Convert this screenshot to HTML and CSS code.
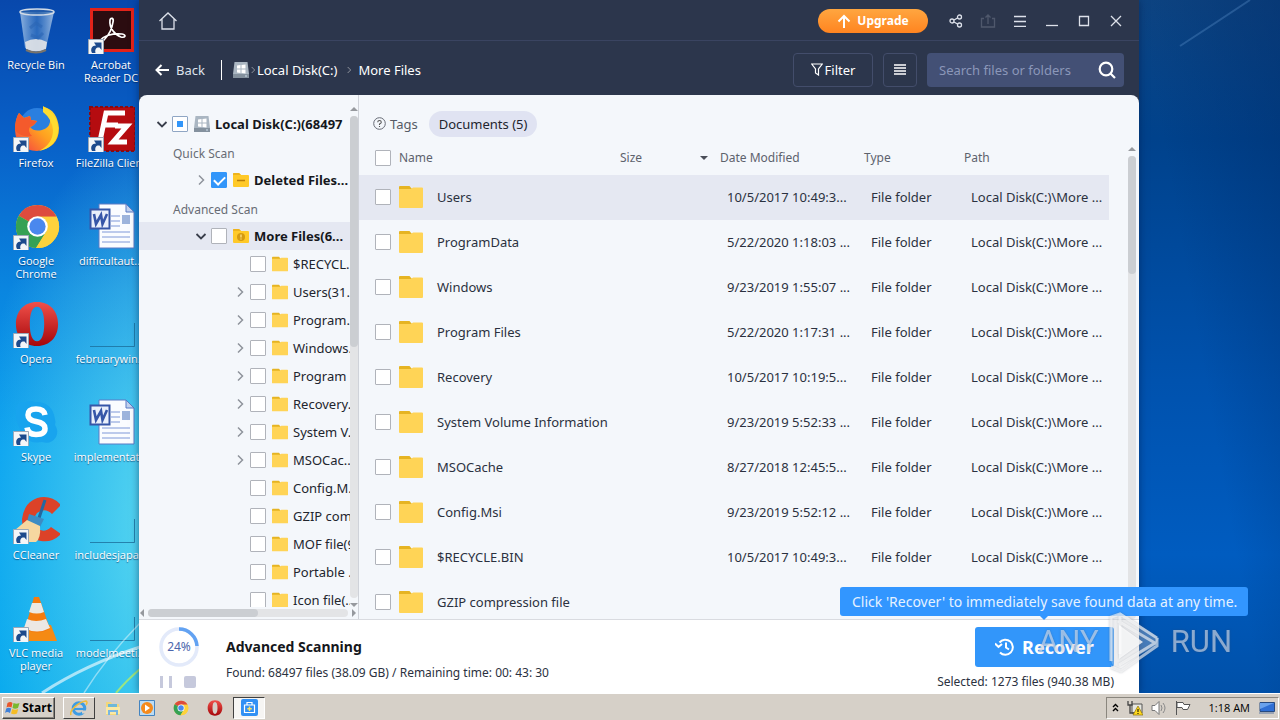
FILE: index.html
```html
<!DOCTYPE html>
<html lang="en">

<head>
    <meta charset="UTF-8">
    <meta name="viewport" content="width=device-width, initial-scale=1.0">
    <title>Data Recovery - More Files</title>
    <link rel="stylesheet" href="styles.css">
</head>

<body>
    <!-- Shared icons -->
    <svg class="sprite" width="0" height="0" aria-hidden="true">
        <symbol id="folder" viewBox="0 0 24 22">
            <path d="M0 1Q0 0 1 0h9.500l2.500 3v5H0z" fill="#e6b422" />
            <path d="M0 3h12l2-1.500h9q1 0 1 1V21q0 1-1 1H1q-1 0-1-1z" fill="#ffd456" />
        </symbol>
        <symbol id="folder-minus" viewBox="0 0 16 16">
            <path d="M0 2q0-1 1-1h5l2 2h7q1 0 1 1v10q0 1-1 1H1q-1 0-1-1z" fill="#ffc928" />
            <path d="M0 2q0-1 1-1h5l2 2H0z" fill="#eeb31c" />
            <path d="M4 8.500h8" stroke="#b97e08" stroke-width="1.500" />
        </symbol>
        <symbol id="folder-info" viewBox="0 0 16 16">
            <path d="M0 2q0-1 1-1h5l2 2h7q1 0 1 1v10q0 1-1 1H1q-1 0-1-1z" fill="#ffc928" />
            <path d="M0 2q0-1 1-1h5l2 2H0z" fill="#eeb31c" />
            <circle cx="8" cy="9" r="4" fill="#d59a10" />
            <path d="M8 6.500v3M8 10.500v1" stroke="#ffe48a" stroke-width="1.300" />
        </symbol>
        <symbol id="disk" viewBox="0 0 16 16">
            <path d="M1.500 0h13L16 12H0z" fill="#aab6c2" />
            <path d="M0 12h16v4H0z" fill="#84919e" />
            <path d="M4 3.500l3.500-.5v3.500H4zM8.500 3l4-.5v4h-4zM4 7.500h3.500V11L4 10.500zM8.500 7.500h4v4l-4-.5z" fill="#fff" />
            <path d="M12 14h2" stroke="#cfe0ee" />
        </symbol>
        <symbol id="right" viewBox="0 0 12 12">
            <path d="M4 1.500L8.500 6 4 10.500" fill="none" stroke="#8f939c" stroke-width="1.500" />
        </symbol>
        <symbol id="down" viewBox="0 0 12 12">
            <path d="M1.500 4L6 8.500 10.500 4" fill="none" stroke="#3a3f4c" stroke-width="1.800" />
        </symbol>
        <symbol id="shortcut" viewBox="0 0 16 16">
            <path d="M.5.5h15v15H.5z" fill="#f4f6f8" stroke="#9ba8b8" />
            <path d="M4 14C2 10 4 6.500 8 6.500L6 3.500h7.500V11L11.500 8.500C8.500 8 6.500 10 7.500 14z" fill="#1d4a8c" />
        </symbol>
        <symbol id="chrome" viewBox="0 0 48 48">
            <circle cx="24" cy="24" r="22" fill="#fdd23c" />
            <path d="M24 24L4.900 13A22 22 0 0 1 43.500 14H24z" fill="#dd4b3e" />
            <path d="M24 24L4.900 13A22 22 0 0 0 22.500 46L33 29z" fill="#35a155" />
            <path d="M24 14h19.500A22 22 0 0 1 22.500 46L33 29z" fill="#fdd23c" />
            <circle cx="24" cy="24" r="10.500" fill="#fff" />
            <circle cx="24" cy="24" r="8.300" fill="#4a88ee" />
        </symbol>
        <symbol id="opera" viewBox="0 0 48 48">
            <path d="M24 1C10 1 2 11 2 24s8 23 22 23 22-10 22-23S38 1 24 1zm0 5c5 0 7.500 7 7.500 18S29 42 24 42s-7.500-7-7.500-18S19 6 24 6z" fill="url(#operaRed)" />
        </symbol>
        <symbol id="word" viewBox="0 0 48 48">
            <path d="M12 2h27l8 8v36H12z" fill="#fafcff" stroke="#5b7bc4" />
            <path d="M39 2v8h8z" fill="#c2d2ee" stroke="#5b7bc4" />
            <path d="M24 14h9M24 19h9M24 24h9M15 30h28M15 35h28M15 40h28" stroke="#7f98d8" />
            <path d="M35 13h8v9h-8z" fill="#9db4dc" />
            <path d="M3.500 7.500h19v19h-19z" fill="#e9effb" stroke="#3656a8" stroke-width="2" />
            <path d="M7 12l2 10 5-9 1.500 9L20 12" fill="none" stroke="#3656a8" stroke-width="2.600" />
        </symbol>
        <symbol id="blank" viewBox="0 0 48 48">
            <path d="M3 46.500h44.500V23" fill="none" stroke="#1c6f9c" stroke-opacity=".8" />
        </symbol>
        <defs>
            <linearGradient id="operaRed" x1="0" y1="0" x2="0" y2="1">
                <stop offset="0" stop-color="#f0504a" />
                <stop offset="1" stop-color="#a5060a" />
            </linearGradient>
            <linearGradient id="foxBody" x1="1" y1="0" x2="0" y2="1">
                <stop offset="0" stop-color="#ffe52e" />
                <stop offset=".5" stop-color="#ffa020" />
                <stop offset="1" stop-color="#f4324a" />
            </linearGradient>
            <linearGradient id="binGlass" x1="0" y1="0" x2="1" y2="0">
                <stop offset="0" stop-color="#b9d3ee" stop-opacity=".75" />
                <stop offset=".5" stop-color="#4c86c8" stop-opacity=".5" />
                <stop offset="1" stop-color="#c4daf0" stop-opacity=".75" />
            </linearGradient>
        </defs>
    </svg>

    <div class="desktop">
        <svg class="streaks streaks-left" viewBox="0 0 140 112" aria-hidden="true">
            <path d="M42 112Q85 84 140 66" stroke="#fff" stroke-width="3" stroke-opacity=".6" />
            <path d="M84 112Q105 78 140 42" stroke="#fff" stroke-width="1.500" stroke-opacity=".45" />
            <path d="M116 112Q126 100 140 88" stroke="#b4ee66" stroke-width="2" stroke-opacity=".8" />
        </svg>
        <svg class="streaks streaks-right" viewBox="0 0 140 60" aria-hidden="true">
            <path d="M40 46Q74 24 110 0" stroke="#6aa0d8" stroke-width="2" stroke-opacity=".3" />
        </svg>

        <div class="shortcuts">
            <a href="#" class="shortcut">
                <svg class="shortcut-icon" viewBox="0 0 48 48">
                    <path d="M8 6l5 36q11 6 21 0l8-36z" fill="url(#binGlass)" />
                    <path d="M13 36q11-6 22 0l-1 7q-10 5-20 0z" fill="#e4e6e8" fill-opacity=".9" />
                    <path d="M18 22l6-5 6 4M31 27l-5 5-7-3" fill="none" stroke="#2c66b4" stroke-width="3" stroke-opacity=".6" />
                    <ellipse cx="25" cy="6" rx="17" ry="3" fill="#3a6ca8" fill-opacity=".5" stroke="#d2dbe6" stroke-width="1.500" />
                    <path d="M14 44q10 5 20 0" fill="none" stroke="#77736c" stroke-width="2" />
                </svg>
                <span>Recycle Bin</span>
            </a>
            <a href="#" class="shortcut">
                <svg class="shortcut-icon" viewBox="0 0 48 48">
                    <path d="M4.500 3.500h41v41h-41z" fill="#2b0c10" stroke="#e2231a" stroke-width="3" />
                    <path d="M13 35c3-5 12-8 22-7 5 1 3 4-1 3-6-2-12-9-11-17 1-3 4-2 3 2-1 7-5 14-9 18-3 3-6 4-4 1z" fill="none" stroke="#fff" stroke-width="1.700" />
                    <use href="#shortcut" x="1" y="33" width="16" height="16" />
                </svg>
                <span>Acrobat<br>Reader DC</span>
            </a>
            <a href="#" class="shortcut">
                <svg class="shortcut-icon" viewBox="0 0 48 48">
                    <circle cx="25" cy="21" r="17" fill="#2a7fe0" />
                    <path d="M7 9l5 5 6-2 1 4 6 1q-3 5-7 6 4 5 12 3 7-2 8-8 1-8-6-15 13 3 15 21 0 20-22 23Q4 46 3 26 3 15 7 9z" fill="url(#foxBody)" />
                    <path d="M7 9l5 5 6-2 1 4 6 1q-3 5-7 6-3 4 2 9Q9 34 3 26 3 15 7 9z" fill="#f45a2c" />
                    <path d="M31 2q17 10 15 27-3 15-19 18 14-7 14-21Q40 15 31 8z" fill="#ffdc30" />
                    <use href="#shortcut" x="1" y="33" width="16" height="16" />
                </svg>
                <span>Firefox</span>
            </a>
            <a href="#" class="shortcut">
                <svg class="shortcut-icon" viewBox="0 0 48 48">
                    <path d="M3 3h45v44H3z" fill="#b50c10" stroke="#8b0b10" stroke-width="2" stroke-dasharray="3 2" />
                    <path d="M13 37L19 9h19M16 21h15M28 22h12L26 38h14" fill="none" stroke="#fff" stroke-width="5" />
                    <use href="#shortcut" x="1" y="33" width="16" height="16" />
                </svg>
                <span>FileZilla Client</span>
            </a>
            <a href="#" class="shortcut">
                <svg class="shortcut-icon" viewBox="0 0 48 48">
                    <use href="#chrome" x="2" y="1" width="47" height="47" />
                    <use href="#shortcut" x="1" y="33" width="16" height="16" />
                </svg>
                <span>Google<br>Chrome</span>
            </a>
            <a href="#" class="shortcut">
                <svg class="shortcut-icon"><use href="#word" /></svg>
                <span>difficultaut...</span>
            </a>
            <a href="#" class="shortcut">
                <svg class="shortcut-icon" viewBox="0 0 48 48">
                    <use href="#opera" x="2" y="0" width="46" height="48" />
                    <use href="#shortcut" x="1" y="33" width="16" height="16" />
                </svg>
                <span>Opera</span>
            </a>
            <a href="#" class="shortcut">
                <svg class="shortcut-icon"><use href="#blank" /></svg>
                <span>februarywin...</span>
            </a>
            <a href="#" class="shortcut">
                <svg class="shortcut-icon" viewBox="0 0 48 48">
                    <path d="M4 12Q4 3 14 4q4-2 9 0 17-1 20 17 1 3 0 6 4 6 1 12-5 8-14 5Q12 47 7 29 3 20 4 12z" fill="#18a4ee" />
                    <path d="M33 17q-1-6-9-6-8 0-8 6 0 5 8 6.500 9 1.500 9 7 0 6-9 6-8 0-9-7" fill="none" stroke="#fff" stroke-width="5.500" />
                    <use href="#shortcut" x="1" y="33" width="16" height="16" />
                </svg>
                <span>Skype</span>
            </a>
            <a href="#" class="shortcut">
                <svg class="shortcut-icon"><use href="#word" /></svg>
                <span>implementat...</span>
            </a>
            <a href="#" class="shortcut">
                <svg class="shortcut-icon" viewBox="0 0 48 48">
                    <path d="M49 9L40 18Q33 11 25 17q-6 7 0 15 7 6 14-1l10 7Q40 47 29 45 10 42 10 23 13 2 32 1q10 0 17 8z" fill="#dc4228" />
                    <path d="M33 4l-6 18" stroke="#2468a0" stroke-width="3" />
                    <path d="M17 18l15 5-4 8-13-5z" fill="#3d8cc4" />
                    <path d="M15 24l13 6q1 12-4 16H11L3 34z" fill="#f6d7a0" />
                    <use href="#shortcut" x="1" y="33" width="16" height="16" />
                </svg>
                <span>CCleaner</span>
            </a>
            <a href="#" class="shortcut">
                <svg class="shortcut-icon"><use href="#blank" /></svg>
                <span>includesjapa...</span>
            </a>
            <a href="#" class="shortcut">
                <svg class="shortcut-icon" viewBox="0 0 48 48">
                    <path d="M13 31h26l6 16H10z" fill="#f58a14" />
                    <path d="M22 3h5l11 32q-13 7-25 0z" fill="#f47c10" />
                    <path d="M20 9h9l3 9q-7 3-15 0zM15 25q9 4 19 0l4 9q-13 7-26 0z" fill="#ece8e4" />
                    <use href="#shortcut" x="1" y="33" width="16" height="16" />
                </svg>
                <span>VLC media<br>player</span>
            </a>
            <a href="#" class="shortcut">
                <svg class="shortcut-icon"><use href="#blank" /></svg>
                <span>modelmeeti...</span>
            </a>
        </div>

        <div class="app">
            <header class="titlebar">
                <button class="icon-btn" aria-label="Home">
                    <svg width="20" height="20" viewBox="0 0 20 20"><path d="M1.500 10L10 2l8.500 8M4 8v10h12V8" /></svg>
                </button>
                <div class="window-controls">
                    <button class="upgrade">
                        <svg width="14" height="14" viewBox="0 0 14 14"><path d="M7 14V2M1.500 7.500L7 2l5.500 5.500" fill="none" stroke="#fff" stroke-width="2" /></svg>
                        Upgrade
                    </button>
                    <button class="icon-btn" aria-label="Share">
                        <svg width="14" height="14" viewBox="0 0 14 14"><circle cx="3" cy="7" r="2" /><circle cx="10.500" cy="3" r="2" /><circle cx="10.500" cy="11" r="2" /><path d="M5 6l3.500-2M5 8l3.500 2" /></svg>
                    </button>
                    <button class="icon-btn dim" aria-label="Export" disabled>
                        <svg width="16" height="14" viewBox="0 0 16 14"><path d="M4 4.500H1.500v8.500h13V4.500H12M8 10V1M5.500 3.500L8 1l2.500 2.500" /></svg>
                    </button>
                    <button class="icon-btn" aria-label="Menu">
                        <svg width="12" height="12" viewBox="0 0 12 12"><path d="M0 1.500h12M0 6.500h12M0 11.500h12" /></svg>
                    </button>
                    <button class="icon-btn" aria-label="Minimize">
                        <svg width="12" height="12" viewBox="0 0 12 12"><path d="M0 10.500h12" /></svg>
                    </button>
                    <button class="icon-btn" aria-label="Maximize">
                        <svg width="12" height="12" viewBox="0 0 12 12"><path d="M1.500 1.500h9v9h-9z" /></svg>
                    </button>
                    <button class="icon-btn" aria-label="Close">
                        <svg width="12" height="12" viewBox="0 0 12 12"><path d="M1 1l10 10M11 1L1 11" /></svg>
                    </button>
                </div>
            </header>

            <div class="toolbar">
                <button class="back">
                    <svg width="14" height="12" viewBox="0 0 14 12"><path d="M14 6H2M6.500 1L1.500 6l5 5" fill="none" stroke="#fff" stroke-width="2" /></svg>
                    Back
                </button>
                <nav class="breadcrumb">
                    <svg width="16" height="16"><use href="#disk" /></svg>
                    <svg width="8" height="8"><use href="#right" /></svg>
                    <a href="#">Local Disk(C:)</a>
                    <svg class="crumb-arrow" width="8" height="8"><use href="#right" /></svg>
                    <a href="#">More Files</a>
                </nav>
                <button class="tool-btn filter">
                    <svg width="12" height="13" viewBox="0 0 12 13"><path d="M.7 1h10.600L7.500 6v6L4.500 10V6z" fill="none" stroke="#fff" stroke-width="1.200" /></svg>
                    Filter
                </button>
                <button class="tool-btn list-btn" aria-label="List view">
                    <svg width="12" height="11" viewBox="0 0 12 11"><path d="M0 1h12M0 4h12M0 7h12M0 10h12" stroke="#fff" stroke-width="1.500" /></svg>
                </button>
                <div class="search">
                    <input type="text" placeholder="Search files or folders" aria-label="Search files or folders">
                    <button aria-label="Search">
                        <svg width="18" height="18" viewBox="0 0 18 18"><circle cx="8" cy="8" r="6.300" fill="none" stroke="#fff" stroke-width="2.200" /><path d="M12.500 12.500L17 17" stroke="#fff" stroke-width="2.200" /></svg>
                    </button>
                </div>
            </div>

            <main class="content">
                <aside class="sidebar">
                    <div class="tree-area">
                        <ul class="tree">
                            <li class="node root"><svg class="arrow"><use href="#down" /></svg><input type="checkbox" class="partial" id="t1"><svg class="node-icon"><use href="#disk" /></svg><label for="t1">Local Disk(C:)(68497</label></li>
                            <li class="node heading">Quick Scan</li>
                            <li class="node level-1"><svg class="arrow"><use href="#right" /></svg><input type="checkbox" id="t2" checked><svg class="node-icon"><use href="#folder-minus" /></svg><label for="t2">Deleted Files...</label></li>
                            <li class="node heading">Advanced Scan</li>
                            <li class="node level-1 active"><svg class="arrow"><use href="#down" /></svg><input type="checkbox" id="t3"><svg class="node-icon"><use href="#folder-info" /></svg><label for="t3">More Files(6...</label></li>
                            <li class="node level-2"><svg class="arrow"></svg><input type="checkbox" id="t4"><svg class="node-icon"><use href="#folder" /></svg><label for="t4">$RECYCL...</label></li>
                            <li class="node level-2"><svg class="arrow"><use href="#right" /></svg><input type="checkbox" id="t5"><svg class="node-icon"><use href="#folder" /></svg><label for="t5">Users(31...</label></li>
                            <li class="node level-2"><svg class="arrow"><use href="#right" /></svg><input type="checkbox" id="t6"><svg class="node-icon"><use href="#folder" /></svg><label for="t6">Program...</label></li>
                            <li class="node level-2"><svg class="arrow"><use href="#right" /></svg><input type="checkbox" id="t7"><svg class="node-icon"><use href="#folder" /></svg><label for="t7">Windows...</label></li>
                            <li class="node level-2"><svg class="arrow"><use href="#right" /></svg><input type="checkbox" id="t8"><svg class="node-icon"><use href="#folder" /></svg><label for="t8">Program</label></li>
                            <li class="node level-2"><svg class="arrow"><use href="#right" /></svg><input type="checkbox" id="t9"><svg class="node-icon"><use href="#folder" /></svg><label for="t9">Recovery...</label></li>
                            <li class="node level-2"><svg class="arrow"><use href="#right" /></svg><input type="checkbox" id="t10"><svg class="node-icon"><use href="#folder" /></svg><label for="t10">System V...</label></li>
                            <li class="node level-2"><svg class="arrow"><use href="#right" /></svg><input type="checkbox" id="t11"><svg class="node-icon"><use href="#folder" /></svg><label for="t11">MSOCac...</label></li>
                            <li class="node level-2"><svg class="arrow"></svg><input type="checkbox" id="t12"><svg class="node-icon"><use href="#folder" /></svg><label for="t12">Config.M...</label></li>
                            <li class="node level-2"><svg class="arrow"></svg><input type="checkbox" id="t13"><svg class="node-icon"><use href="#folder" /></svg><label for="t13">GZIP com</label></li>
                            <li class="node level-2"><svg class="arrow"></svg><input type="checkbox" id="t14"><svg class="node-icon"><use href="#folder" /></svg><label for="t14">MOF file(9</label></li>
                            <li class="node level-2"><svg class="arrow"></svg><input type="checkbox" id="t15"><svg class="node-icon"><use href="#folder" /></svg><label for="t15">Portable ...</label></li>
                            <li class="node level-2"><svg class="arrow"></svg><input type="checkbox" id="t16"><svg class="node-icon"><use href="#folder" /></svg><label for="t16">Icon file(...</label></li>
                        </ul>
                        <div class="scroll-y">
                            <i class="scroll-up"></i>
                            <div class="track"><div class="thumb"></div></div>
                            <i class="scroll-down"></i>
                        </div>
                    </div>
                    <div class="scroll-x">
                        <i class="scroll-left"></i>
                        <div class="track"><div class="thumb"></div></div>
                        <i class="scroll-right"></i>
                    </div>
                </aside>

                <section class="files">
                    <div class="tags">
                        <svg width="13" height="13" viewBox="0 0 13 13"><circle cx="6.500" cy="6.500" r="5.800" fill="none" stroke="#666a74" /><path d="M4.700 5.200Q4.800 3.500 6.500 3.500T8.300 5.200Q8.200 6.300 6.500 7V8M6.500 9v1" fill="none" stroke="#555" stroke-width="1.100" /></svg>
                        <span>Tags</span>
                        <button class="tag">Documents (5)</button>
                    </div>
                    <div class="list-area">
                        <div class="table-wrap">
                            <table>
                                <thead>
                                    <tr>
                                        <th class="col-name"><div class="head-name"><input type="checkbox" id="all"><label for="all">Name</label></div></th>
                                        <th class="col-size"><div class="head-size">Size<i class="sort"></i></div></th>
                                        <th class="col-date">Date Modified</th>
                                        <th class="col-type">Type</th>
                                        <th class="col-path">Path</th>
                                    </tr>
                                </thead>
                                <tbody>
                                    <tr class="selected">
                                        <td><div class="file-name"><input type="checkbox" id="f1"><svg class="file-icon"><use href="#folder" /></svg><label for="f1">Users</label></div></td>
                                        <td></td><td>10/5/2017 10:49:3...</td><td>File folder</td><td>Local Disk(C:)\More ...</td>
                                    </tr>
                                    <tr>
                                        <td><div class="file-name"><input type="checkbox" id="f2"><svg class="file-icon"><use href="#folder" /></svg><label for="f2">ProgramData</label></div></td>
                                        <td></td><td>5/22/2020 1:18:03 ...</td><td>File folder</td><td>Local Disk(C:)\More ...</td>
                                    </tr>
                                    <tr>
                                        <td><div class="file-name"><input type="checkbox" id="f3"><svg class="file-icon"><use href="#folder" /></svg><label for="f3">Windows</label></div></td>
                                        <td></td><td>9/23/2019 1:55:07 ...</td><td>File folder</td><td>Local Disk(C:)\More ...</td>
                                    </tr>
                                    <tr>
                                        <td><div class="file-name"><input type="checkbox" id="f4"><svg class="file-icon"><use href="#folder" /></svg><label for="f4">Program Files</label></div></td>
                                        <td></td><td>5/22/2020 1:17:31 ...</td><td>File folder</td><td>Local Disk(C:)\More ...</td>
                                    </tr>
                                    <tr>
                                        <td><div class="file-name"><input type="checkbox" id="f5"><svg class="file-icon"><use href="#folder" /></svg><label for="f5">Recovery</label></div></td>
                                        <td></td><td>10/5/2017 10:19:5...</td><td>File folder</td><td>Local Disk(C:)\More ...</td>
                                    </tr>
                                    <tr>
                                        <td><div class="file-name"><input type="checkbox" id="f6"><svg class="file-icon"><use href="#folder" /></svg><label for="f6">System Volume Information</label></div></td>
                                        <td></td><td>9/23/2019 5:52:33 ...</td><td>File folder</td><td>Local Disk(C:)\More ...</td>
                                    </tr>
                                    <tr>
                                        <td><div class="file-name"><input type="checkbox" id="f7"><svg class="file-icon"><use href="#folder" /></svg><label for="f7">MSOCache</label></div></td>
                                        <td></td><td>8/27/2018 12:45:5...</td><td>File folder</td><td>Local Disk(C:)\More ...</td>
                                    </tr>
                                    <tr>
                                        <td><div class="file-name"><input type="checkbox" id="f8"><svg class="file-icon"><use href="#folder" /></svg><label for="f8">Config.Msi</label></div></td>
                                        <td></td><td>9/23/2019 5:52:12 ...</td><td>File folder</td><td>Local Disk(C:)\More ...</td>
                                    </tr>
                                    <tr>
                                        <td><div class="file-name"><input type="checkbox" id="f9"><svg class="file-icon"><use href="#folder" /></svg><label for="f9">$RECYCLE.BIN</label></div></td>
                                        <td></td><td>10/5/2017 10:49:3...</td><td>File folder</td><td>Local Disk(C:)\More ...</td>
                                    </tr>
                                    <tr>
                                        <td><div class="file-name"><input type="checkbox" id="f10"><svg class="file-icon"><use href="#folder" /></svg><label for="f10">GZIP compression file</label></div></td>
                                        <td></td><td></td><td></td><td></td>
                                    </tr>
                                </tbody>
                            </table>
                        </div>
                        <div class="scroll-y">
                            <i class="scroll-up"></i>
                            <div class="track"><div class="thumb"></div></div>
                        </div>
                    </div>
                </section>
            </main>

            <footer class="status">
                <div class="progress">
                    <div class="ring">
                        <svg width="40" height="40" viewBox="0 0 40 40">
                            <circle cx="20" cy="20" r="18" fill="none" stroke="#e3eafa" stroke-width="3.500" />
                            <path d="M20 2A18 18 0 0 1 38 19" fill="none" stroke="#62a2f2" stroke-width="3.500" />
                        </svg>
                        <span>24%</span>
                    </div>
                    <div class="scan-controls">
                        <button class="pause" aria-label="Pause"></button>
                        <button class="stop" aria-label="Stop"></button>
                    </div>
                </div>
                <div class="scan-info">
                    <h2>Advanced Scanning</h2>
                    <p>Found: 68497 files (38.09 GB) / Remaining time: 00: 43: 30</p>
                </div>
                <div class="recover-area">
                    <button class="recover">
                        <svg width="20" height="18" viewBox="0 0 20 18"><path d="M4.500 4.500A7.500 7.500 0 1 1 5 14.500M0 5.500l3.500 3.500L7 6M11 4.500V9.500l3 2" fill="none" stroke="#fff" stroke-width="2" /></svg>
                        Recover
                    </button>
                    <div class="tooltip">Click 'Recover' to immediately save found data at any time.</div>
                    <p>Selected: 1273 files (940.38 MB)</p>
                </div>
            </footer>
        </div>

        <div class="watermark">
            <span>ANY</span>
            <svg width="56" height="62" viewBox="0 0 56 62">
                <path d="M4 6l10-4 38 25-4 8L8 58 4 50z" fill="#fff" fill-opacity=".25" />
                <path d="M12 14l24 17-24 17z" fill="#fff" fill-opacity=".8" />
                <path d="M4 50V6l9-3 37 24M13 3v40M11 10l37 22-36 22M50 27v8L14 60 4 56" fill="none" stroke="#fff" stroke-width="3" stroke-opacity=".6" />
            </svg>
            <span>RUN</span>
        </div>
    </div>

    <div class="taskbar">
        <button class="start">
            <svg width="16" height="16" viewBox="0 0 16 16">
                <path d="M2.500 3q3-2 5 0l-1 4.500q-3-1.500-5 0z" fill="#e8562a" />
                <path d="M8.500 3q3 1.500 6 0l-1.500 5q-3 1.500-5.500 0z" fill="#7ab82e" />
                <path d="M1.200 8.500q2.500-1.500 5 0L5 13q-3-2-5 0z" fill="#3f80d8" />
                <path d="M7.200 9q3 1.500 6 0L12 13.500q-3 1.500-6 0z" fill="#f6bd26" />
            </svg>
            Start
        </button>
        <button class="task raised" aria-label="Internet Explorer">
            <svg width="18" height="18" viewBox="0 0 18 18"><circle cx="9" cy="9.500" r="5.800" fill="none" stroke="#3d9ce4" stroke-width="3" /><path d="M4 10h10" stroke="#3d9ce4" stroke-width="2.200" /><path d="M12 11.500h6v3h-6z" fill="#d6d0c8" /><path d="M1 16C-1 12 8 3 16 2q2 1 0 4" fill="none" stroke="#f0bc38" stroke-width="1.500" /></svg>
        </button>
        <button class="task" aria-label="Explorer">
            <svg width="16" height="16" viewBox="0 0 16 16"><path d="M1 2h5l1 2h7v11H1z" fill="#f3d77a" /><path d="M3 4h9v4H3z" fill="#6fb8d8" /><path d="M1 7h14v7H1z" fill="#fbe9a4" /><path d="M4 15v-4h8v4" fill="none" stroke="#7ab6e0" stroke-width="2" /></svg>
        </button>
        <button class="task" aria-label="Media Player">
            <svg width="16" height="16" viewBox="0 0 16 16"><path d="M.5.5h15v15H.5z" fill="#bcdcf4" stroke="#4484c0" /><circle cx="8" cy="8" r="6" fill="#f58a1c" /><path d="M6 4.500l5 3.500-5 3.500z" fill="#fff" /></svg>
        </button>
        <button class="task" aria-label="Chrome">
            <svg width="16" height="16"><use href="#chrome" /></svg>
        </button>
        <button class="task" aria-label="Opera">
            <svg width="16" height="16"><use href="#opera" /></svg>
        </button>
        <button class="task pressed" aria-label="Data Recovery">
            <svg width="17" height="17" viewBox="0 0 17 17"><rect width="17" height="17" rx="2" fill="#3290f4" /><path d="M3.500 6h10v7.500h-10zM6 6V3.500h5V6" fill="none" stroke="#fff" stroke-width="1.200" /><path d="M8.500 7.500v4.500M6.300 9.700h4.500" stroke="#ffe060" stroke-width="1.500" /></svg>
        </button>
        <div class="tray">
            <svg width="7" height="9" viewBox="0 0 7 9"><path d="M1 4l2.500-2.500L6 4M1 8l2.500-2.500L6 8" fill="none" stroke="#000" stroke-width="1.400" /></svg>
            <svg width="16" height="16" viewBox="0 0 16 16"><path d="M5 4h10v9H5z" fill="#e6e6e0" stroke="#555" /><path d="M1 1v4h4V1M3 5v8h4" fill="none" stroke="#444" stroke-width="1.300" /><path d="M11 6l5 9H6z" fill="#ffd91c" stroke="#8c7008" stroke-width=".7" /><path d="M11 9v3M11 13v1" stroke="#000" /></svg>
            <svg width="16" height="14" viewBox="0 0 16 14"><path d="M1 4.500h3l4-4v13l-4-4H1z" fill="#fff" stroke="#777" /><path d="M10 4q2 3 0 6M12 2q4 5 0 10" fill="none" stroke="#888" /></svg>
            <svg width="16" height="14" viewBox="0 0 16 14"><path d="M1.500 0v14" stroke="#555" /><path d="M2 1.500h6l1 2h6l-2.500 5H8l-1-2H2z" fill="#fff" stroke="#555" /></svg>
            <span class="clock">1:18 AM</span>
            <svg width="16" height="12" viewBox="0 0 16 12"><path d="M1 .5h14.500v9H1z" fill="#2f6fd4" stroke="#274a80" /><path d="M1 1h14L1 7z" fill="#6aa2ec" /><path d="M0 11h15" stroke="#9aa4b4" stroke-width="2" /></svg>
        </div>
    </div>
</body>

</html>
```

FILE: styles.css
```css
:root {
    --app-dark: #2c364c;
    --app-line: #3a4461;
    --panel: #f4f7fb;
    --row-active: #e5e8f2;
    --blue: #3296fa;
    --taskbar: #d6d0c8;
}

* {
    margin: 0;
    padding: 0;
    box-sizing: border-box;
}

body {
    display: flex;
    flex-direction: column;
    height: 100vh;
    overflow: hidden;
    font-family: "Noto Sans", "Open Sans", sans-serif;
    font-size: 13px;
    line-height: 18px;
    color: #2b3140;
}

button {
    font: inherit;
    border: none;
    background: none;
    cursor: pointer;
}

a {
    color: inherit;
    text-decoration: none;
}

svg {
    flex-shrink: 0;
}

.sprite {
    position: absolute;
}

/* Desktop */
.desktop {
    position: relative;
    flex: 1;
    overflow: hidden;
    background:
        linear-gradient(260deg, rgba(0, 40, 100, 0.4), transparent 140px) 100% 0 / 50% 100% no-repeat,
        linear-gradient(#0d4482, #00428c 20%, #0052ae 55%, #005cc0 80%, #0050a8) 100% 0 / 50% 100% no-repeat,
        radial-gradient(220px 420px at 190px 76%, rgba(120, 235, 240, 0.85), transparent) 0 0 / 50% 100% no-repeat,
        linear-gradient(#0848ac, #0860c8 20%, #0a86e0 42%, #06a0f0 65%, #06a8ee) 0 0 / 50% 100% no-repeat;
}

.streaks {
    position: absolute;
    fill: none;
}

.streaks-left {
    left: 0;
    bottom: 0;
    width: 140px;
}

.streaks-right {
    right: 0;
    top: 0;
    width: 140px;
}

.shortcuts {
    display: grid;
    grid-template-columns: 72px 78px;
    grid-auto-rows: 98px;
    width: 150px;
    padding-top: 6px;
}

.shortcut {
    display: flex;
    flex-direction: column;
    align-items: center;
    gap: 4px;
    font-family: "Open Sans", sans-serif;
    font-size: 11px;
    line-height: 13px;
    text-align: center;
    white-space: nowrap;
    color: #fff;
    text-shadow: 0 1px 1px rgba(0, 30, 80, 0.6);
}

.shortcut-icon {
    width: 48px;
    height: 48px;
}

/* App window */
.app {
    position: absolute;
    top: 0;
    bottom: 0;
    left: 139px;
    right: 141px;
    display: flex;
    flex-direction: column;
    background: var(--app-dark);
    box-shadow: 0 0 8px rgba(0, 20, 60, 0.5);
}

.titlebar {
    display: flex;
    justify-content: space-between;
    align-items: center;
    height: 41px;
    padding: 2px 7px 0 13px;
    border-bottom: 1px solid var(--app-line);
}

.window-controls {
    display: flex;
    align-items: center;
}

.icon-btn {
    display: flex;
    align-items: center;
    justify-content: center;
    width: 32px;
    height: 32px;
}

.icon-btn svg {
    fill: none;
    stroke: #dde1ea;
    stroke-width: 1.3;
}

.icon-btn.dim {
    opacity: 0.2;
}

.upgrade {
    display: flex;
    align-items: center;
    justify-content: center;
    gap: 6px;
    width: 110px;
    height: 24px;
    margin-right: 12px;
    border-radius: 12px;
    background: linear-gradient(#ffa640, #ff8420);
    color: #fff;
    font-weight: bold;
    font-size: 12px;
}

.toolbar {
    display: flex;
    align-items: center;
    gap: 10px;
    height: 54px;
    padding: 3px 15px 0 16px;
    color: #fff;
}

.back {
    display: flex;
    align-items: center;
    gap: 7px;
    color: #dfe3ec;
}

.breadcrumb {
    display: flex;
    flex: 1;
    align-items: center;
    height: 20px;
    margin-left: 6px;
    padding-left: 11px;
    border-left: 1px solid #fff;
}

.crumb-arrow {
    margin: 0 5px 0 8px;
}

.tool-btn {
    display: flex;
    align-items: center;
    justify-content: center;
    gap: 2px;
    height: 34px;
    border: 1px solid #434d6b;
    border-radius: 4px;
    color: #fff;
}

.filter {
    width: 80px;
}

.list-btn {
    width: 34px;
}

.search {
    display: flex;
    align-items: center;
    width: 197px;
    height: 34px;
    padding: 0 8px 0 12px;
    border-radius: 4px;
    background: #435075;
}

.search input {
    flex: 1;
    min-width: 0;
    border: none;
    outline: none;
    background: none;
    font: inherit;
    color: #fff;
}

.search input::placeholder {
    color: #8b97b9;
    opacity: 1;
}

.search button {
    height: 18px;
}

.content {
    display: flex;
    flex: 1;
    min-height: 0;
    border-radius: 8px 8px 0 0;
    background: var(--panel);
    overflow: hidden;
}

input[type="checkbox"] {
    appearance: none;
    flex-shrink: 0;
    width: 16px;
    height: 16px;
    border: 1px solid #b0b3ba;
    border-radius: 1px;
    background: #fff;
}

input[type="checkbox"]:checked {
    border-color: var(--blue);
    background: var(--blue);
    position: relative;
}

input[type="checkbox"]:checked::after {
    content: "";
    position: absolute;
    left: 4px;
    top: 1px;
    width: 5px;
    height: 9px;
    border: solid #fff;
    border-width: 0 2px 2px 0;
    transform: rotate(45deg);
}

input[type="checkbox"].partial {
    background: linear-gradient(var(--blue), var(--blue)) center / 6px 6px no-repeat #fff;
    border-color: #8fa6c4;
}

/* Folder tree */
.sidebar {
    display: flex;
    flex-direction: column;
    width: 220px;
    border-right: 1px solid #cfd2d9;
}

.tree-area {
    display: flex;
    flex: 1;
    min-height: 0;
}

.tree {
    flex: 1;
    min-width: 0;
    padding-top: 15px;
    list-style: none;
    overflow: hidden;
}

.node {
    display: flex;
    align-items: center;
    height: 28px;
    padding-left: 17px;
    white-space: nowrap;
    color: #22252e;
}

.root,
.level-1 {
    font-weight: bold;
    color: #15171c;
}

.level-1 {
    padding-left: 56px;
}

.level-2 {
    padding-left: 95px;
}

.heading {
    padding: 3px 0 0 34px;
    font-size: 12px;
    color: #686c75;
}

.active {
    background: var(--row-active);
}

.arrow {
    width: 12px;
    height: 12px;
}

.node input {
    margin: 0 6px 0 4px;
}

.node-icon {
    width: 16px;
    height: 16px;
    margin-right: 5px;
}

.scroll-y {
    display: flex;
    flex-direction: column;
    align-items: center;
    width: 8px;
    padding-top: 12px;
    gap: 5px;
}

.track {
    flex: 1;
    border-radius: 4px;
    background: #e3e4e6;
}

.scroll-y .track {
    width: 8px;
}

.thumb {
    border-radius: 4px;
    background: #cbced2;
}

.sidebar .scroll-y .thumb {
    height: 48%;
}

.files .scroll-y .thumb {
    height: 118px;
}

.scroll-up,
.scroll-down,
.scroll-left,
.scroll-right {
    border: 4px solid transparent;
}

.scroll-up {
    border-width: 0 4px 4px;
    border-bottom-color: #96999e;
}

.scroll-down {
    border-width: 4px 4px 0;
    border-top-color: #96999e;
}

.scroll-left {
    border-width: 4px 4px 4px 0;
    border-right-color: #96999e;
}

.scroll-right {
    border-width: 4px 0 4px 4px;
    border-left-color: #96999e;
}

.scroll-x {
    display: flex;
    align-items: center;
    gap: 4px;
    height: 12px;
    padding: 0 2px 0 1px;
}

.scroll-x .track,
.scroll-x .thumb {
    height: 8px;
}

.scroll-x .thumb {
    width: 55%;
}

/* File list */
.files {
    display: flex;
    flex: 1;
    flex-direction: column;
    min-width: 0;
}

.tags {
    display: flex;
    align-items: center;
    gap: 4px;
    height: 46px;
    padding: 11px 14px 0;
    color: #565b66;
}

.tag {
    height: 26px;
    margin-left: 7px;
    padding: 0 10px;
    border-radius: 13px;
    background: #e0e3f2;
    color: #22252e;
}

.list-area {
    display: flex;
    flex: 1;
    min-height: 0;
    padding-right: 3px;
}

.list-area .scroll-y {
    padding-top: 6px;
}

.table-wrap {
    flex: 1;
    margin-right: 19px;
    overflow: hidden;
}

table {
    width: 100%;
    table-layout: fixed;
    border-collapse: collapse;
}

th {
    height: 34px;
    padding-left: 10px;
    font-size: 12px;
    font-weight: normal;
    text-align: left;
    color: #5d626d;
}

td {
    height: 45px;
    padding: 0 0 2px 17px;
    white-space: nowrap;
}

th:first-child,
td:first-child {
    padding-left: 16px;
}

.col-size {
    width: 100px;
}

.col-date {
    width: 144px;
}

.col-type {
    width: 100px;
}

.col-path {
    width: 155px;
}

.head-name,
.head-size,
.file-name {
    display: flex;
    align-items: center;
    gap: 8px;
}

.head-size {
    justify-content: space-between;
    padding-right: 2px;
}

.sort {
    border: solid transparent;
    border-width: 4px 4px 0;
    border-top-color: #4a4e58;
}

.selected {
    background: var(--row-active);
}

.file-icon {
    width: 24px;
    height: 22px;
    margin-right: 6px;
}

/* Scan status */
.status {
    display: flex;
    align-items: flex-start;
    height: 74px;
    padding: 7px 25px 0 20px;
    border-top: 1px solid #d9dbe0;
    background: #fff;
}

.progress {
    width: 67px;
}

.ring {
    position: relative;
    width: 40px;
    height: 40px;
}

.ring span {
    position: absolute;
    inset: 0;
    font-size: 12px;
    line-height: 39px;
    text-align: center;
    color: #4c66ac;
}

.scan-controls {
    display: flex;
    gap: 12px;
    padding: 9px 0 0 1px;
}

.pause {
    width: 12px;
    height: 12px;
    border: solid #c6c9dc;
    border-width: 0 3px;
}

.stop {
    width: 12px;
    height: 12px;
    border-radius: 2px;
    background: #c6c9dc;
}

.scan-info {
    flex: 1;
    padding-top: 11px;
}

.scan-info h2 {
    font-size: 14px;
    line-height: 18px;
    color: #15171c;
}

.scan-info p,
.recover-area p {
    font-size: 12px;
}

.scan-info p {
    padding-top: 8px;
}

.recover-area {
    position: relative;
    display: flex;
    flex-direction: column;
    align-items: flex-end;
    gap: 6px;
}

.recover {
    display: flex;
    align-items: center;
    justify-content: center;
    gap: 7px;
    width: 139px;
    height: 40px;
    border-radius: 3px;
    background: var(--blue);
    color: #fff;
    font-size: 18px;
    font-weight: bold;
}

.tooltip {
    position: absolute;
    right: -134px;
    bottom: 75px;
    width: 408px;
    height: 29px;
    padding-left: 12px;
    border-radius: 3px;
    background: #3296ff;
    color: #e6f2ff;
    font-size: 14px;
    line-height: 30px;
    white-space: nowrap;
}

.tooltip::after {
    content: "";
    position: absolute;
    left: 50%;
    top: 100%;
    margin-left: -4px;
    border: solid transparent;
    border-width: 4px 4px 0;
    border-top-color: #3296ff;
}

.watermark {
    position: absolute;
    right: 48px;
    bottom: 20px;
    display: flex;
    align-items: center;
    gap: 8px;
    font-family: Roboto, "Liberation Sans", sans-serif;
    font-size: 31px;
    color: rgba(225, 230, 240, 0.6);
    filter: drop-shadow(0 0 1px rgba(60, 70, 90, 0.5));
    pointer-events: none;
}

/* Taskbar */
.taskbar {
    display: flex;
    align-items: center;
    gap: 2px;
    height: 27px;
    padding: 1px 1px 0 2px;
    border-top: 1px solid #fff;
    background: var(--taskbar);
    font-family: "Open Sans", sans-serif;
    font-size: 11px;
    color: #000;
}

.start {
    display: flex;
    align-items: center;
    justify-content: center;
    gap: 1px;
    width: 53px;
    height: 22px;
    margin-right: 6px;
    border: 1px solid;
    border-color: #fff #404040 #404040 #fff;
    box-shadow: inset -1px -1px #8a867e;
    font-size: 12px;
    font-weight: bold;
}

.task {
    display: flex;
    align-items: center;
    justify-content: center;
    width: 32px;
    height: 22px;
    border: 1px solid transparent;
}

.raised {
    border-color: #fff #404040 #404040 #fff;
}

.pressed {
    border-color: #404040 #fff #fff #404040;
    background: #f6f5f3;
}

.tray {
    display: flex;
    align-items: center;
    gap: 8px;
    height: 22px;
    margin-left: auto;
    padding: 0 3px 0 5px;
    border: 1px solid;
    border-color: #8a867e #fff #fff #8a867e;
}

.clock {
    padding: 0 1px 0 10px;
}
```
